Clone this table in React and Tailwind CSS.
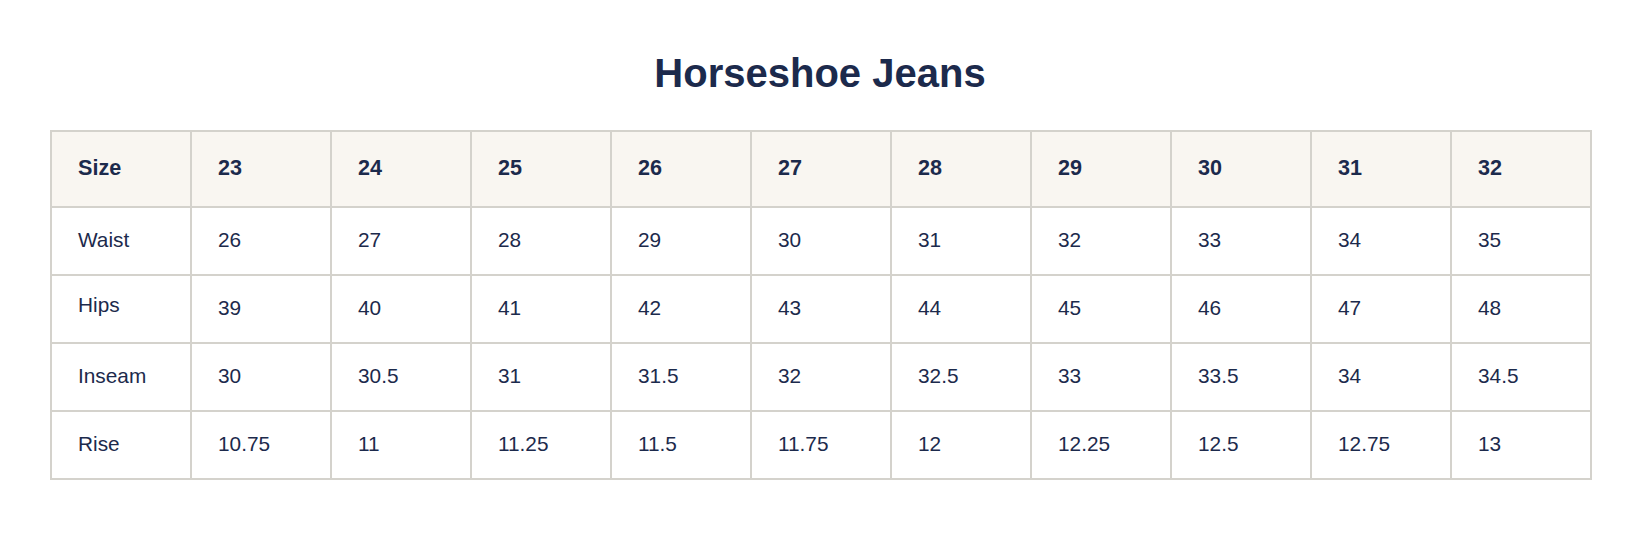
const sizes = ["23", "24", "25", "26", "27", "28", "29", "30", "31", "32"];

const rows = [
  { label: "Waist", values: ["26", "27", "28", "29", "30", "31", "32", "33", "34", "35"] },
  { label: "Hips", values: ["39", "40", "41", "42", "43", "44", "45", "46", "47", "48"], lift: true },
  { label: "Inseam", values: ["30", "30.5", "31", "31.5", "32", "32.5", "33", "33.5", "34", "34.5"] },
  { label: "Rise", values: ["10.75", "11", "11.25", "11.5", "11.75", "12", "12.25", "12.5", "12.75", "13"] },
];

export default function App() {
  return (
    <div className="min-h-[548px] bg-white pl-[50px] pt-[49px] text-[#1c2a4c] font-['Liberation_Sans',Arial,sans-serif]">
      <h1 className="w-[1540px] text-center text-[40px] font-bold leading-[48px] mb-[33px]">Horseshoe Jeans</h1>

      <table className="w-[1542px] table-fixed border-collapse">
        <thead>
          <tr className="bg-[#f9f6f1]">
            <th className="h-[76px] border-2 border-[#d4d2cc] pl-[26px] pb-[2px] text-left align-middle text-[21.6px] font-bold">
              Size
            </th>
            {sizes.map((s) => (
              <th
                key={s}
                className="h-[76px] border-2 border-[#d4d2cc] pl-[26px] pb-[2px] text-left align-middle text-[21.6px] font-bold"
              >
                {s}
              </th>
            ))}
          </tr>
        </thead>
        <tbody>
          {rows.map((row) => (
            <tr key={row.label}>
              <td
                className={
                  row.lift
                    ? "h-[68px] border-2 border-[#d4d2cc] pl-[26px] pb-[8px] align-middle text-[20.8px]"
                    : "h-[68px] border-2 border-[#d4d2cc] pl-[26px] pb-[2px] align-middle text-[20.8px]"
                }
              >
                {row.label}
              </td>
              {row.values.map((v, i) => (
                <td key={i} className="h-[68px] border-2 border-[#d4d2cc] pl-[26px] pb-[2px] align-middle text-[20.8px]">
                  {v}
                </td>
              ))}
            </tr>
          ))}
        </tbody>
      </table>
    </div>
  );
}
